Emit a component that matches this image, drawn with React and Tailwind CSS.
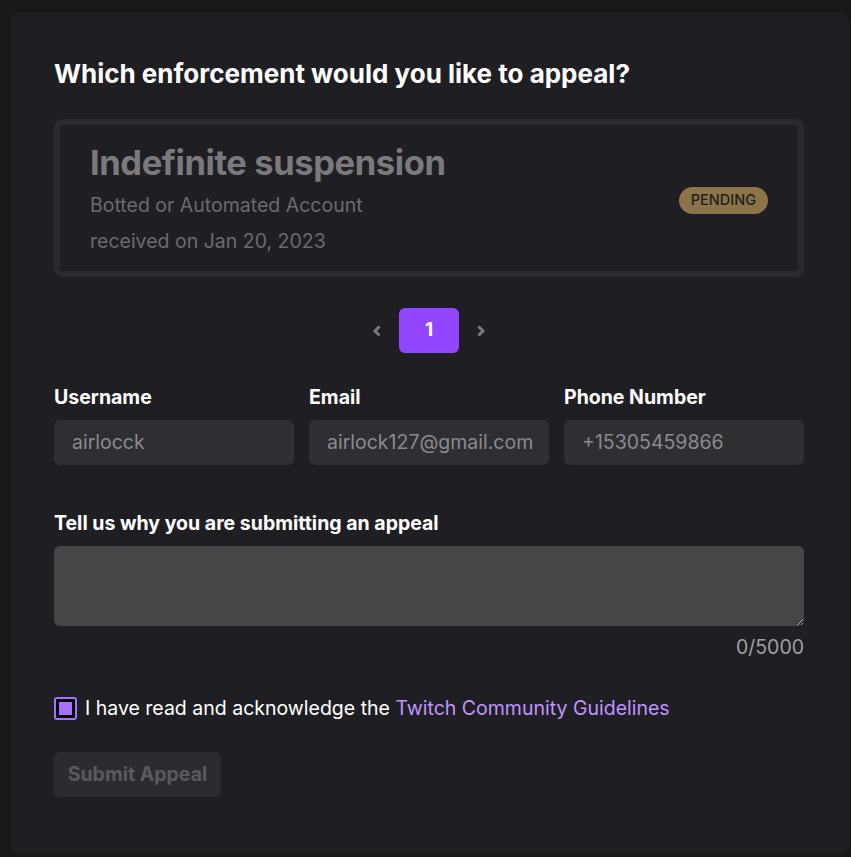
import React from "react";

function Chevron({ dir }) {
  return (
    <svg width="10" height="14" viewBox="0 0 10 14" className="block">
      {dir === "left" ? (
        <path d="M7.5 2.5 L3 7 L7.5 11.5" fill="none" stroke="#7a7a7e" strokeWidth="3" strokeLinecap="butt" strokeLinejoin="miter" />
      ) : (
        <path d="M2.5 2.5 L7 7 L2.5 11.5" fill="none" stroke="#7a7a7e" strokeWidth="3" strokeLinecap="butt" strokeLinejoin="miter" />
      )}
    </svg>
  );
}

function Field({ label, value }) {
  return (
    <div className="flex flex-col">
      <div className="text-[19.5px] font-bold text-white leading-[22px] h-[22px]">{label}</div>
      <div className="mt-[12px] h-[45px] rounded-[6px] bg-[#2f2f33] flex items-center pl-[18px] text-[19.5px] text-[#8a8a8e] overflow-hidden whitespace-nowrap">
        {value}
      </div>
    </div>
  );
}

export default function App() {
  return (
    <div className="min-h-[857px] bg-[#18181a] pt-[12px] pl-[10px] pr-[2px] pb-[2px]" style={{ fontFamily: "Inter, 'Noto Sans', sans-serif" }}>
      <div className="bg-[#1f1f23] rounded-[10px] h-[843px] pl-[44px] pr-[45px] pt-[47px]">
        <h1 className="text-[26px] font-bold text-white leading-[30px]">
          Which enforcement would you like to appeal?
        </h1>
        <div className="mt-[30px] border-[6px] border-[#2a2a2e] rounded-[8px] h-[158px] flex items-center pl-[30px] pr-[30px]">
          <div className="flex-1 flex flex-col">
            <div className="text-[34.5px] font-bold text-[#7a7a7e] leading-[40px] tracking-[-0.4px]">Indefinite suspension</div>
            <div className="mt-[9px] text-[19.5px] text-[#6b6b6f] leading-[26px]">Botted or Automated Account</div>
            <div className="mt-[10px] text-[19.5px] text-[#6b6b6f] leading-[26px]">received on Jan 20, 2023</div>
          </div>
          <div className="h-[27px] px-[12px] rounded-full bg-[#8b7448] flex items-center text-[14.5px] text-[#1f1f23] font-medium mt-[4px]">
            PENDING
          </div>
        </div>
        <div className="mt-[31px] flex items-center justify-center gap-[17px]">
          <Chevron dir="left" />
          <div className="w-[60px] h-[45px] rounded-[6px] bg-[#9147ff] flex items-center justify-center text-white font-bold text-[19px]">1</div>
          <Chevron dir="right" />
        </div>
        <div className="mt-[33px] grid grid-cols-3 gap-[15px]">
          <Field label="Username" value="airlocck" />
          <Field label="Email" value="airlock127@gmail.com" />
          <Field label="Phone Number" value="+15305459866" />
        </div>
        <div className="mt-[47px] text-[19.5px] font-bold text-white leading-[22px]">
          Tell us why you are submitting an appeal
        </div>
        <textarea className="mt-[12px] block w-full h-[80px] rounded-[6px] bg-[#464649] outline-none resize-y" />
        <div className="mt-[8px] text-right text-[19.5px] text-[#a0a0a5] leading-[26px]">0/5000</div>
        <div className="mt-[35px] flex items-center gap-[8px]">
          <div className="w-[23px] h-[23px] rounded-[3px] border-[2px] border-[#a970ff] bg-black flex items-center justify-center">
            <div className="w-[13px] h-[13px] bg-[#a970ff]" />
          </div>
          <div className="text-[19.5px] text-white leading-[26px]">
            I have read and acknowledge the <span className="text-[#bf94ff]">Twitch Community Guidelines</span>
          </div>
        </div>
        <div className="mt-[31px] w-[167px] h-[45px] rounded-[6px] bg-[#2c2c30] flex items-center justify-center text-[19.5px] font-bold text-[#5a5a5e]">
          Submit Appeal
        </div>
      </div>
    </div>
  );
}
